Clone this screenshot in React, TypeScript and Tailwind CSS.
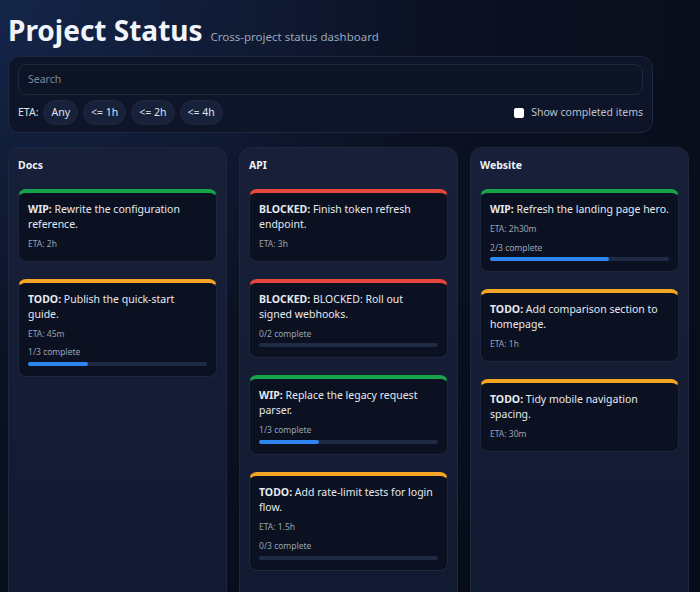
import React from 'react';

type Item = { status: 'WIP' | 'TODO' | 'BLOCKED'; text: string; eta?: string; done?: number; total?: number };

const columns: { name: string; items: Item[] }[] = [
  {
    name: 'Docs',
    items: [
      { status: 'WIP', text: 'Rewrite the configuration reference.', eta: '2h' },
      { status: 'TODO', text: 'Publish the quick-start guide.', eta: '45m', done: 1, total: 3 },
    ],
  },
  {
    name: 'API',
    items: [
      { status: 'BLOCKED', text: 'Finish token refresh endpoint.', eta: '3h' },
      { status: 'BLOCKED', text: 'BLOCKED: Roll out signed webhooks.', done: 0, total: 2 },
      { status: 'WIP', text: 'Replace the legacy request parser.', done: 1, total: 3 },
      { status: 'TODO', text: 'Add rate-limit tests for login flow.', eta: '1.5h', done: 0, total: 3 },
    ],
  },
  {
    name: 'Website',
    items: [
      { status: 'WIP', text: 'Refresh the landing page hero.', eta: '2h30m', done: 2, total: 3 },
      { status: 'TODO', text: 'Add comparison section to homepage.', eta: '1h' },
      { status: 'TODO', text: 'Tidy mobile navigation spacing.', eta: '30m' },
    ],
  },
];

const borderFor = {
  WIP: 'border-t-[#16a34a]',
  TODO: 'border-t-[#f5a524]',
  BLOCKED: 'border-t-[#e5483b]',
};

const Card: React.FC<{ item: Item }> = ({ item }) => (
  <div className={`rounded-lg border border-[#1e2740] border-t-4 ${borderFor[item.status]} bg-[#0b1120] px-[9px] pt-[9px] pb-[10px]`}>
    <div className="text-[10.5px] leading-[15px] text-[#e6e9f0]">
      <b className="font-bold">{item.status}:</b> {item.text}
    </div>
    {item.eta && <div className="mt-[6px] text-[8.5px] text-[#9aa3b5]">ETA: {item.eta}</div>}
    {item.total !== undefined && (
      <div className="mt-[6px]">
        <div className="text-[8.5px] text-[#9aa3b5]">{item.done}/{item.total} complete</div>
        <div className="mt-[3px] h-[4px] rounded-full bg-[#1f2a44]">
          <div className="h-full rounded-full bg-[#2f86f0]" style={{ width: `${((item.done ?? 0) / item.total) * 100}%` }} />
        </div>
      </div>
    )}
  </div>
);

export default function App() {
  return (
    <div
      className="h-[592px] overflow-hidden bg-[radial-gradient(ellipse_at_top_left,#15264a_0%,#0b1122_45%,#070b16_100%)] px-2 pt-[12px]"
      style={{ fontFamily: '"Noto Sans", sans-serif' }}
    >
      <div className="flex items-baseline gap-2">
        <h1 className="text-[28px] font-bold leading-[36px] text-[#f1f4fa]">Project Status</h1>
        <span className="text-[11.5px] text-[#9aa6bd]">Cross-project status dashboard</span>
      </div>
      <div className="mt-[8px] w-[645px] rounded-xl border border-[#1e2740] bg-[#0e1528] px-[9px] pt-[7px] pb-[7px]">
        <div className="flex h-[31px] items-center rounded-lg border border-[#1e2740] bg-[#0d1426] px-[9px] text-[10.5px] text-[#7d879c]">Search</div>
        <div className="mt-[5px] flex items-center gap-[5px] text-[10.5px] text-[#dfe4ee]">
          <span>ETA:</span>
          {['Any', '<= 1h', '<= 2h', '<= 4h'].map((c) => (
            <span key={c} className="rounded-full border border-[#1e2740] bg-[#18213a] px-[7px] py-[4px] leading-[15px]">{c}</span>
          ))}
          <label className="ml-auto flex items-center gap-[7px] text-[#b9c1d1]">
            <span className="h-[10px] w-[10px] rounded-[2px] bg-white" />
            Show completed items
          </label>
        </div>
      </div>
      <div className="mt-[14px] grid grid-cols-3 gap-3 pr-[3px]">
        {columns.map((col) => (
          <div key={col.name} className="h-[460px] rounded-xl border border-[#1e2740] bg-[linear-gradient(180deg,#172038,#111a30)] px-[9px] pt-[10px]">
            <div className="text-[10.5px] font-bold text-[#eef1f7]">{col.name}</div>
            <div className="mt-[15px] flex flex-col gap-[17px]">
              {col.items.map((it, i) => <Card key={i} item={it} />)}
            </div>
          </div>
        ))}
      </div>
    </div>
  );
}
